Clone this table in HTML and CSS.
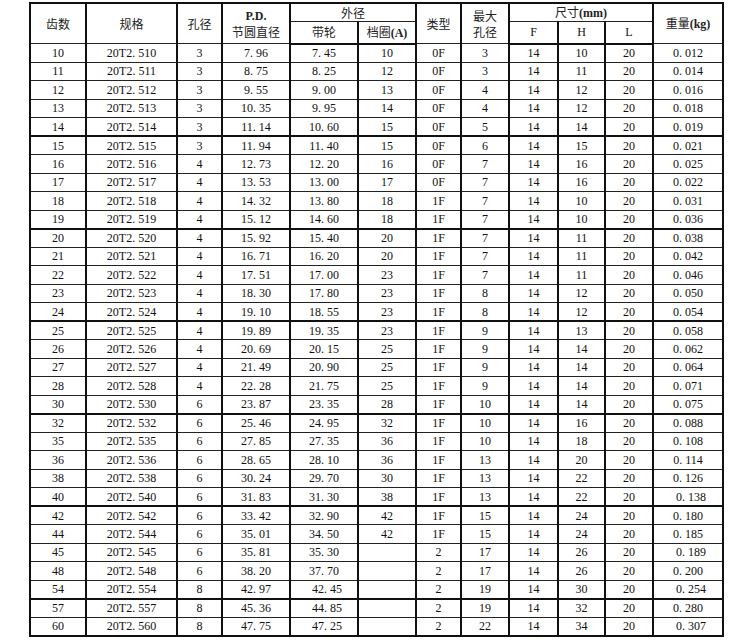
FILE: index.html
```html
<!DOCTYPE html>
<html lang="zh">
<head>
<meta charset="utf-8">
<title>20T2 同步带轮</title>
<link rel="stylesheet" href="styles.css">
</head>
<body>
<table class="spec">
  <colgroup>
    <col class="c1"><col class="c2"><col class="c3"><col class="c4"><col class="c5"><col class="c6">
    <col class="c7"><col class="c8"><col class="c9"><col class="c10"><col class="c11"><col class="c12">
  </colgroup>
  <thead>
    <tr class="h1">
      <th rowspan="2" class="cjk">齿数</th>
      <th rowspan="2" class="cjk">规格</th>
      <th rowspan="2" class="cjk">孔径</th>
      <th rowspan="2" class="cjk"><span class="pd">P.D.</span><br>节圆直径</th>
      <th colspan="2" class="cjk">外径</th>
      <th rowspan="2" class="cjk">类型</th>
      <th rowspan="2" class="cjk">最大<br>孔径</th>
      <th colspan="3" class="cjk">尺寸<span class="lat">(mm)</span></th>
      <th rowspan="2" class="cjk">重量<span class="lat">(kg)</span></th>
    </tr>
    <tr class="h2">
      <th class="cjk">带轮</th>
      <th class="cjk">档圈<span class="lat">(A)</span></th>
      <th class="lat">F</th>
      <th class="lat">H</th>
      <th class="lat">L</th>
    </tr>
  </thead>
  <tbody>
    <tr><td>10</td><td>20T2. 510</td><td>3</td><td>7. 96</td><td>7. 45</td><td>10</td><td>0F</td><td>3</td><td>14</td><td>10</td><td>20</td><td>0. 012</td></tr>
    <tr><td>11</td><td>20T2. 511</td><td>3</td><td>8. 75</td><td>8. 25</td><td>12</td><td>0F</td><td>3</td><td>14</td><td>11</td><td>20</td><td>0. 014</td></tr>
    <tr><td>12</td><td>20T2. 512</td><td>3</td><td>9. 55</td><td>9. 00</td><td>13</td><td>0F</td><td>4</td><td>14</td><td>12</td><td>20</td><td>0. 016</td></tr>
    <tr><td>13</td><td>20T2. 513</td><td>3</td><td>10. 35</td><td>9. 95</td><td>14</td><td>0F</td><td>4</td><td>14</td><td>12</td><td>20</td><td>0. 018</td></tr>
    <tr><td>14</td><td>20T2. 514</td><td>3</td><td>11. 14</td><td>10. 60</td><td>15</td><td>0F</td><td>5</td><td>14</td><td>14</td><td>20</td><td>0. 019</td></tr>
    <tr class="g"><td>15</td><td>20T2. 515</td><td>3</td><td>11. 94</td><td>11. 40</td><td>15</td><td>0F</td><td>6</td><td>14</td><td>15</td><td>20</td><td>0. 021</td></tr>
    <tr><td>16</td><td>20T2. 516</td><td>4</td><td>12. 73</td><td>12. 20</td><td>16</td><td>0F</td><td>7</td><td>14</td><td>16</td><td>20</td><td>0. 025</td></tr>
    <tr><td>17</td><td>20T2. 517</td><td>4</td><td>13. 53</td><td>13. 00</td><td>17</td><td>0F</td><td>7</td><td>14</td><td>16</td><td>20</td><td>0. 022</td></tr>
    <tr><td>18</td><td>20T2. 518</td><td>4</td><td>14. 32</td><td>13. 80</td><td>18</td><td>1F</td><td>7</td><td>14</td><td>10</td><td>20</td><td>0. 031</td></tr>
    <tr><td>19</td><td>20T2. 519</td><td>4</td><td>15. 12</td><td>14. 60</td><td>18</td><td>1F</td><td>7</td><td>14</td><td>10</td><td>20</td><td>0. 036</td></tr>
    <tr class="g"><td>20</td><td>20T2. 520</td><td>4</td><td>15. 92</td><td>15. 40</td><td>20</td><td>1F</td><td>7</td><td>14</td><td>11</td><td>20</td><td>0. 038</td></tr>
    <tr><td>21</td><td>20T2. 521</td><td>4</td><td>16. 71</td><td>16. 20</td><td>20</td><td>1F</td><td>7</td><td>14</td><td>11</td><td>20</td><td>0. 042</td></tr>
    <tr><td>22</td><td>20T2. 522</td><td>4</td><td>17. 51</td><td>17. 00</td><td>23</td><td>1F</td><td>7</td><td>14</td><td>11</td><td>20</td><td>0. 046</td></tr>
    <tr><td>23</td><td>20T2. 523</td><td>4</td><td>18. 30</td><td>17. 80</td><td>23</td><td>1F</td><td>8</td><td>14</td><td>12</td><td>20</td><td>0. 050</td></tr>
    <tr><td>24</td><td>20T2. 524</td><td>4</td><td>19. 10</td><td>18. 55</td><td>23</td><td>1F</td><td>8</td><td>14</td><td>12</td><td>20</td><td>0. 054</td></tr>
    <tr class="g"><td>25</td><td>20T2. 525</td><td>4</td><td>19. 89</td><td>19. 35</td><td>23</td><td>1F</td><td>9</td><td>14</td><td>13</td><td>20</td><td>0. 058</td></tr>
    <tr><td>26</td><td>20T2. 526</td><td>4</td><td>20. 69</td><td>20. 15</td><td>25</td><td>1F</td><td>9</td><td>14</td><td>14</td><td>20</td><td>0. 062</td></tr>
    <tr><td>27</td><td>20T2. 527</td><td>4</td><td>21. 49</td><td>20. 90</td><td>25</td><td>1F</td><td>9</td><td>14</td><td>14</td><td>20</td><td>0. 064</td></tr>
    <tr><td>28</td><td>20T2. 528</td><td>4</td><td>22. 28</td><td>21. 75</td><td>25</td><td>1F</td><td>9</td><td>14</td><td>14</td><td>20</td><td>0. 071</td></tr>
    <tr><td>30</td><td>20T2. 530</td><td>6</td><td>23. 87</td><td>23. 35</td><td>28</td><td>1F</td><td>10</td><td>14</td><td>14</td><td>20</td><td>0. 075</td></tr>
    <tr class="g"><td>32</td><td>20T2. 532</td><td>6</td><td>25. 46</td><td>24. 95</td><td>32</td><td>1F</td><td>10</td><td>14</td><td>16</td><td>20</td><td>0. 088</td></tr>
    <tr><td>35</td><td>20T2. 535</td><td>6</td><td>27. 85</td><td>27. 35</td><td>36</td><td>1F</td><td>10</td><td>14</td><td>18</td><td>20</td><td>0. 108</td></tr>
    <tr><td>36</td><td>20T2. 536</td><td>6</td><td>28. 65</td><td>28. 10</td><td>36</td><td>1F</td><td>13</td><td>14</td><td>20</td><td>20</td><td>0. 114</td></tr>
    <tr><td>38</td><td>20T2. 538</td><td>6</td><td>30. 24</td><td>29. 70</td><td>30</td><td>1F</td><td>13</td><td>14</td><td>22</td><td>20</td><td>0. 126</td></tr>
    <tr><td>40</td><td>20T2. 540</td><td>6</td><td>31. 83</td><td>31. 30</td><td>38</td><td>1F</td><td>13</td><td>14</td><td>22</td><td>20</td><td class="sh">0. 138</td></tr>
    <tr class="g"><td>42</td><td>20T2. 542</td><td>6</td><td>33. 42</td><td>32. 90</td><td>42</td><td>1F</td><td>15</td><td>14</td><td>24</td><td>20</td><td>0. 180</td></tr>
    <tr><td>44</td><td>20T2. 544</td><td>6</td><td>35. 01</td><td>34. 50</td><td>42</td><td>1F</td><td>15</td><td>14</td><td>24</td><td>20</td><td>0. 185</td></tr>
    <tr><td>45</td><td>20T2. 545</td><td>6</td><td>35. 81</td><td>35. 30</td><td></td><td>2</td><td>17</td><td>14</td><td>26</td><td>20</td><td class="sh">0. 189</td></tr>
    <tr><td>48</td><td>20T2. 548</td><td>6</td><td>38. 20</td><td>37. 70</td><td></td><td>2</td><td>17</td><td>14</td><td>26</td><td>20</td><td>0. 200</td></tr>
    <tr><td>54</td><td>20T2. 554</td><td>8</td><td>42. 97</td><td class="sh">42. 45</td><td></td><td>2</td><td>19</td><td>14</td><td>30</td><td>20</td><td class="sh">0. 254</td></tr>
    <tr class="g"><td>57</td><td>20T2. 557</td><td>8</td><td>45. 36</td><td class="sh">44. 85</td><td></td><td>2</td><td>19</td><td>14</td><td>32</td><td>20</td><td>0. 280</td></tr>
    <tr><td>60</td><td>20T2. 560</td><td>8</td><td>47. 75</td><td class="sh">47. 25</td><td></td><td>2</td><td>22</td><td>14</td><td>34</td><td>20</td><td class="sh">0. 307</td></tr>
  </tbody>
</table>
</body>
</html>
```

FILE: styles.css
```css
html, body {
  margin: 0;
  padding: 0;
  background: #ffffff;
}

body {
  padding: 2px 0 0 29px;
  font-family: "Liberation Serif", "Noto Sans CJK SC", serif;
  color: #111111;
}

.spec {
  border-collapse: collapse;
  table-layout: fixed;
  width: 694px;
  border: 2px solid #111111;
  font-size: 12px;
  line-height: 14px;
}

.c1 { width: 56px; }
.c2 { width: 91px; }
.c3 { width: 45px; }
.c4 { width: 68px; }
.c5 { width: 68px; }
.c6 { width: 58px; }
.c7 { width: 45px; }
.c8 { width: 48px; }
.c9 { width: 49px; }
.c10 { width: 47px; }
.c11 { width: 48px; }
.c12 { width: 70px; }

.spec th,
.spec td {
  padding: 0;
  text-align: center;
  vertical-align: middle;
  border-left: 2px solid #111111;
  border-right: 2px solid #111111;
  border-top: 1px solid #222222;
  border-bottom: 1px solid #222222;
  white-space: nowrap;
  overflow: hidden;
}

.spec th {
  font-weight: normal;
}

.cjk {
  font-family: "Noto Sans CJK SC", sans-serif;
  font-size: 12px;
  line-height: 16px;
  color: #222222;
}

.lat {
  font-family: "Liberation Serif", serif;
  font-weight: bold;
}

.pd {
  font-family: "Liberation Serif", serif;
  font-weight: bold;
}

.h1 { height: 18px; }
.h2 { height: 22px; }

.spec thead tr.h2 th {
  border-bottom: 2px solid #111111;
}

.spec tbody tr {
  height: 18.5px;
}

.spec tbody tr.g td {
  border-top: 2px solid #111111;
}

.spec td.sh {
  padding-left: 6px;
}
```
